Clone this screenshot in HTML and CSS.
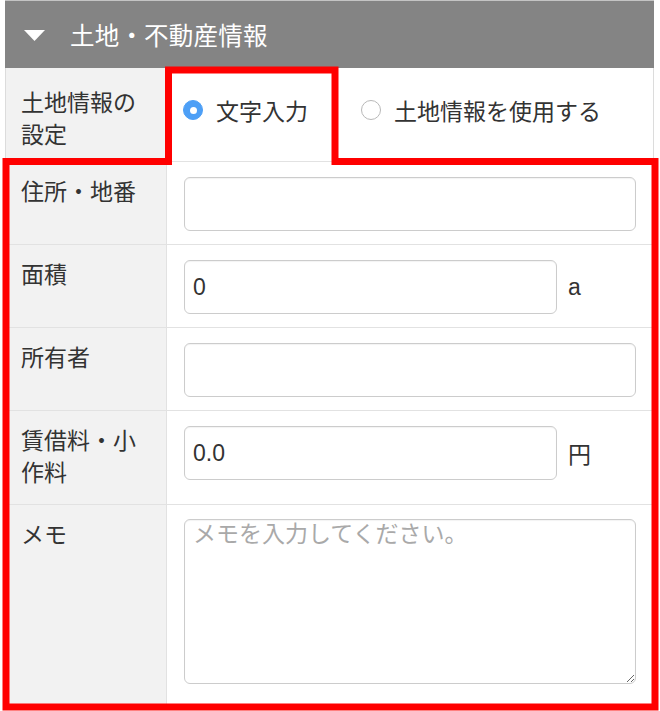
FILE: index.html
```html
<!DOCTYPE html>
<html lang="ja">
<head>
<meta charset="utf-8">
<title>土地・不動産情報</title>
<link rel="stylesheet" href="styles.css">
</head>
<body>
<section class="panel">
  <header class="panel-head">
    <svg class="caret" width="21" height="11" viewBox="0 0 21 11"><polygon points="0,0 21,0 10.5,11" fill="#fff"/></svg>
    <span class="panel-title">土地・不動産情報</span>
  </header>

  <div class="row">
    <div class="label label-first">土地情報の<br>設定</div>
    <div class="value value-radios">
      <label class="option"><span class="radio radio-on"></span><span>文字入力</span></label>
      <label class="option option-second"><span class="radio"></span><span>土地情報を使用する</span></label>
    </div>
  </div>

  <div class="row">
    <div class="label">住所・地番</div>
    <div class="value"><input class="field" type="text" value=""></div>
  </div>

  <div class="row">
    <div class="label">面積</div>
    <div class="value value-unit"><input class="field field-short" type="text" value="0"><span class="unit unit-latin">a</span></div>
  </div>

  <div class="row">
    <div class="label">所有者</div>
    <div class="value"><input class="field" type="text" value=""></div>
  </div>

  <div class="row">
    <div class="label">賃借料・小<br>作料</div>
    <div class="value value-unit"><input class="field field-short" type="text" value="0.0"><span class="unit">円</span></div>
  </div>

  <div class="row row-memo">
    <div class="label">メモ</div>
    <div class="value value-memo"><textarea class="memo" placeholder="メモを入力してください。"></textarea></div>
  </div>
</section>

<svg class="annotation" width="660" height="711" viewBox="0 0 660 711">
  <polygon points="6,707 6,161.5 168.5,161.5 168.5,70 335,70 335,161.5 655,161.5 655,707" fill="none" stroke="#ff0000" stroke-width="7" stroke-linejoin="miter"/>
</svg>
</body>
</html>
```

FILE: styles.css
```css
* { box-sizing: border-box; }

html, body {
  margin: 0;
  padding: 0;
  background: #ffffff;
}

body {
  width: 660px;
  height: 711px;
  overflow: hidden;
  position: relative;
  font-family: "Noto Sans CJK JP", "Noto Sans", sans-serif;
  color: #333333;
  font-size: 23px;
}

.panel {
  margin-left: 5px;
  width: 649px;
}

.panel-head {
  height: 68px;
  background: #848484;
  border-top: 1px solid #c4c4c4;
  display: flex;
  align-items: center;
  padding-left: 19px;
  color: #ffffff;
}

.caret {
  display: block;
  margin-right: 25px;
  margin-top: 2px;
}

.panel-title {
  font-size: 24.5px;
  line-height: 32px;
  letter-spacing: 0.2px;
}

.row {
  display: grid;
  grid-template-columns: 161px 1fr;
  border-left: 1px solid #dcdcdc;
  border-right: 1px solid #dcdcdc;
  border-bottom: 1px solid #e2e2e2;
}

.label {
  background: #f2f2f2;
  border-right: 1px solid #e2e2e2;
  padding: 12px 10px 17px 15px;
  line-height: 32px;
}

.label-first {
  padding-top: 17px;
  padding-bottom: 12px;
}

.value {
  padding: 15px 17px 13px 17px;
  background: #ffffff;
}

.value-radios {
  display: flex;
  align-items: center;
  padding: 0 0 9px 16px;
}

.option {
  display: flex;
  align-items: center;
  line-height: 32px;
}

.option-second {
  margin-left: 53px;
}

.radio {
  width: 20px;
  height: 20px;
  border-radius: 50%;
  border: 1px solid #b8b8b8;
  background: #ffffff;
  margin-right: 13px;
  position: relative;
  flex: none;
}

.radio-on {
  background: #4d9ff6;
  border-color: #4d9ff6;
}

.radio-on::after {
  content: "";
  position: absolute;
  left: 50%;
  top: 50%;
  width: 7px;
  height: 7px;
  margin: -3.5px 0 0 -3.5px;
  border-radius: 50%;
  background: #ffffff;
}

.field {
  display: block;
  width: 100%;
  height: 54px;
  margin: 0;
  border: 1px solid #cccccc;
  border-radius: 6px;
  box-shadow: inset 0 1px 1px rgba(0, 0, 0, 0.05);
  padding: 0 8px;
  font-family: "Liberation Sans", "Noto Sans CJK JP", sans-serif;
  font-size: 23px;
  color: #333333;
  background: #ffffff;
  outline: none;
}

.value-unit {
  display: flex;
  align-items: flex-start;
}

.field-short {
  width: 373px;
  flex: none;
}

.unit {
  margin-left: 11px;
  line-height: 54px;
}

.unit-latin {
  font-family: "Liberation Sans", sans-serif;
}

.value-memo {
  padding-top: 14px;
  padding-bottom: 22px;
}

.memo {
  display: block;
  width: 452px;
  height: 165px;
  margin: 0;
  border: 1px solid #cccccc;
  border-radius: 6px;
  box-shadow: inset 0 1px 1px rgba(0, 0, 0, 0.05);
  padding: 0 8px;
  font-family: "Noto Sans CJK JP", sans-serif;
  font-size: 23px;
  line-height: 1.05;
  color: #333333;
  background: #ffffff;
  outline: none;
}

.memo::placeholder {
  color: #a9a9a9;
}

.annotation {
  position: absolute;
  left: 0;
  top: 0;
  pointer-events: none;
}
```
